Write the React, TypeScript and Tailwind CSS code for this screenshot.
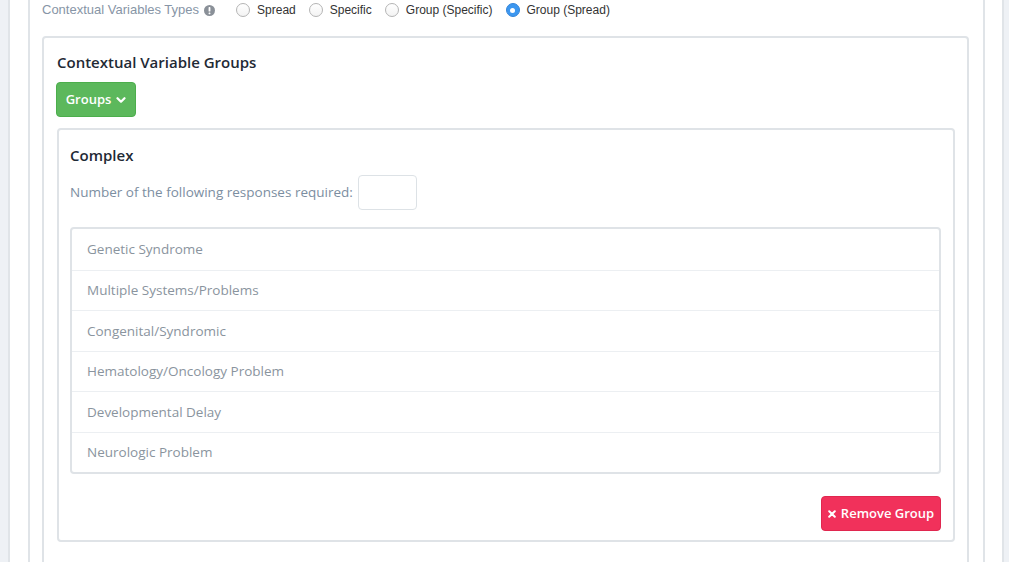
import React from 'react';

const items = [
  'Genetic Syndrome',
  'Multiple Systems/Problems',
  'Congenital/Syndromic',
  'Hematology/Oncology Problem',
  'Developmental Delay',
  'Neurologic Problem',
];

const types = ['Spread', 'Specific', 'Group (Specific)', 'Group (Spread)'];

function Radio({ checked }: { checked?: boolean }) {
  if (checked) {
    return (
      <span className="w-[14px] h-[14px] rounded-full bg-[#3c97f0] border border-[#3585d8] flex items-center justify-center">
        <span className="w-[5px] h-[5px] rounded-full bg-white" />
      </span>
    );
  }
  return <span className="w-[14px] h-[14px] rounded-full bg-gradient-to-b from-white to-[#f3f3f3] border border-[#b4b4b4]" />;
}

export default function App() {
  return (
    <div className="h-[562px] overflow-hidden bg-[#eef1f5] pl-2 pr-[5px]" style={{ fontFamily: "'Open Sans', sans-serif" }}>
      <div className="h-full bg-white border-x-2 border-[#e0e4e8] pl-[18px] pr-[17px]">
        <div className="h-full border-x-2 border-[#e0e4e8] pl-3 pr-[14px]">
          {/* Types row */}
          <div className="h-5 flex items-center" style={{ fontFamily: "'Liberation Sans', Arial, sans-serif" }}>
            <span className="text-[13px] text-[#8795a6]">Contextual Variables Types</span>
            <svg className="ml-[5px]" width="11" height="11" viewBox="0 0 12 12">
              <circle cx="6" cy="6" r="6" fill="#8a9098" />
              <rect x="5" y="2.3" width="2" height="4.8" rx="0.6" fill="#fff" />
              <rect x="5" y="8.2" width="2" height="1.8" rx="0.5" fill="#fff" />
            </svg>
            <div className="ml-[21px] flex items-center gap-[13px] text-[12px] text-[#333]">
              {types.map((t, i) => (
                <label key={t} className="flex items-center gap-[7px]">
                  <Radio checked={i === 3} />
                  <span>{t}</span>
                </label>
              ))}
            </div>
          </div>

          {/* Contextual Variable Groups card */}
          <div className="mt-4 border-2 border-[#dfe3e7] rounded pl-[13px] pr-3 pt-[14px] pb-10">
            <h2 className="text-[15px] leading-5 font-semibold text-[#1f2a35]">Contextual Variable Groups</h2>
            <button className="mt-[10px] -ml-px h-[35px] w-[80px] rounded bg-[#5cb85c] border border-[#4cae4c] text-white text-[13px] font-semibold flex items-center justify-center gap-[5px]">
              Groups
              <svg width="10" height="10" viewBox="0 0 10 10">
                <path d="M1.5 3.2 L5 6.7 L8.5 3.2" fill="none" stroke="#fff" strokeWidth="2.2" strokeLinecap="round" strokeLinejoin="round" />
              </svg>
            </button>

            {/* Complex group */}
            <div className="mt-[11px] border-2 border-[#dfe3e7] rounded pl-[11px] pr-3 pt-[15px] pb-[9px]">
              <h3 className="text-[15px] leading-5 font-semibold text-[#1f2a35]">Complex</h3>
              <div className="mt-[10px] flex items-center gap-[5px]">
                <span className="text-[13.5px] text-[#7c8ea1]">Number of the following responses required:</span>
                <input className="w-[59px] h-[35px] rounded border border-[#dde2e6] outline-none" />
              </div>

              <div className="mt-[17px] border-2 border-[#dfe3e7] rounded">
                {items.map((it, i) => (
                  <div
                    key={it}
                    className={`h-[40.5px] flex items-center pl-[15px] text-[13.5px] text-[#8a949e] ${i > 0 ? 'border-t border-[#eceff2]' : ''}`}
                  >
                    {it}
                  </div>
                ))}
              </div>

              <div className="mt-[22px] flex justify-end">
                <button className="h-[35px] w-[120px] rounded bg-[#f1315b] border border-[#e0274f] text-white text-[13px] font-semibold flex items-center justify-center gap-[5px]">
                  <svg width="8" height="8" viewBox="0 0 8 8">
                    <path d="M1.2 1.2 L6.8 6.8 M6.8 1.2 L1.2 6.8" stroke="#fff" strokeWidth="2" strokeLinecap="round" />
                  </svg>
                  Remove Group
                </button>
              </div>
            </div>
          </div>
        </div>
      </div>
    </div>
  );
}
